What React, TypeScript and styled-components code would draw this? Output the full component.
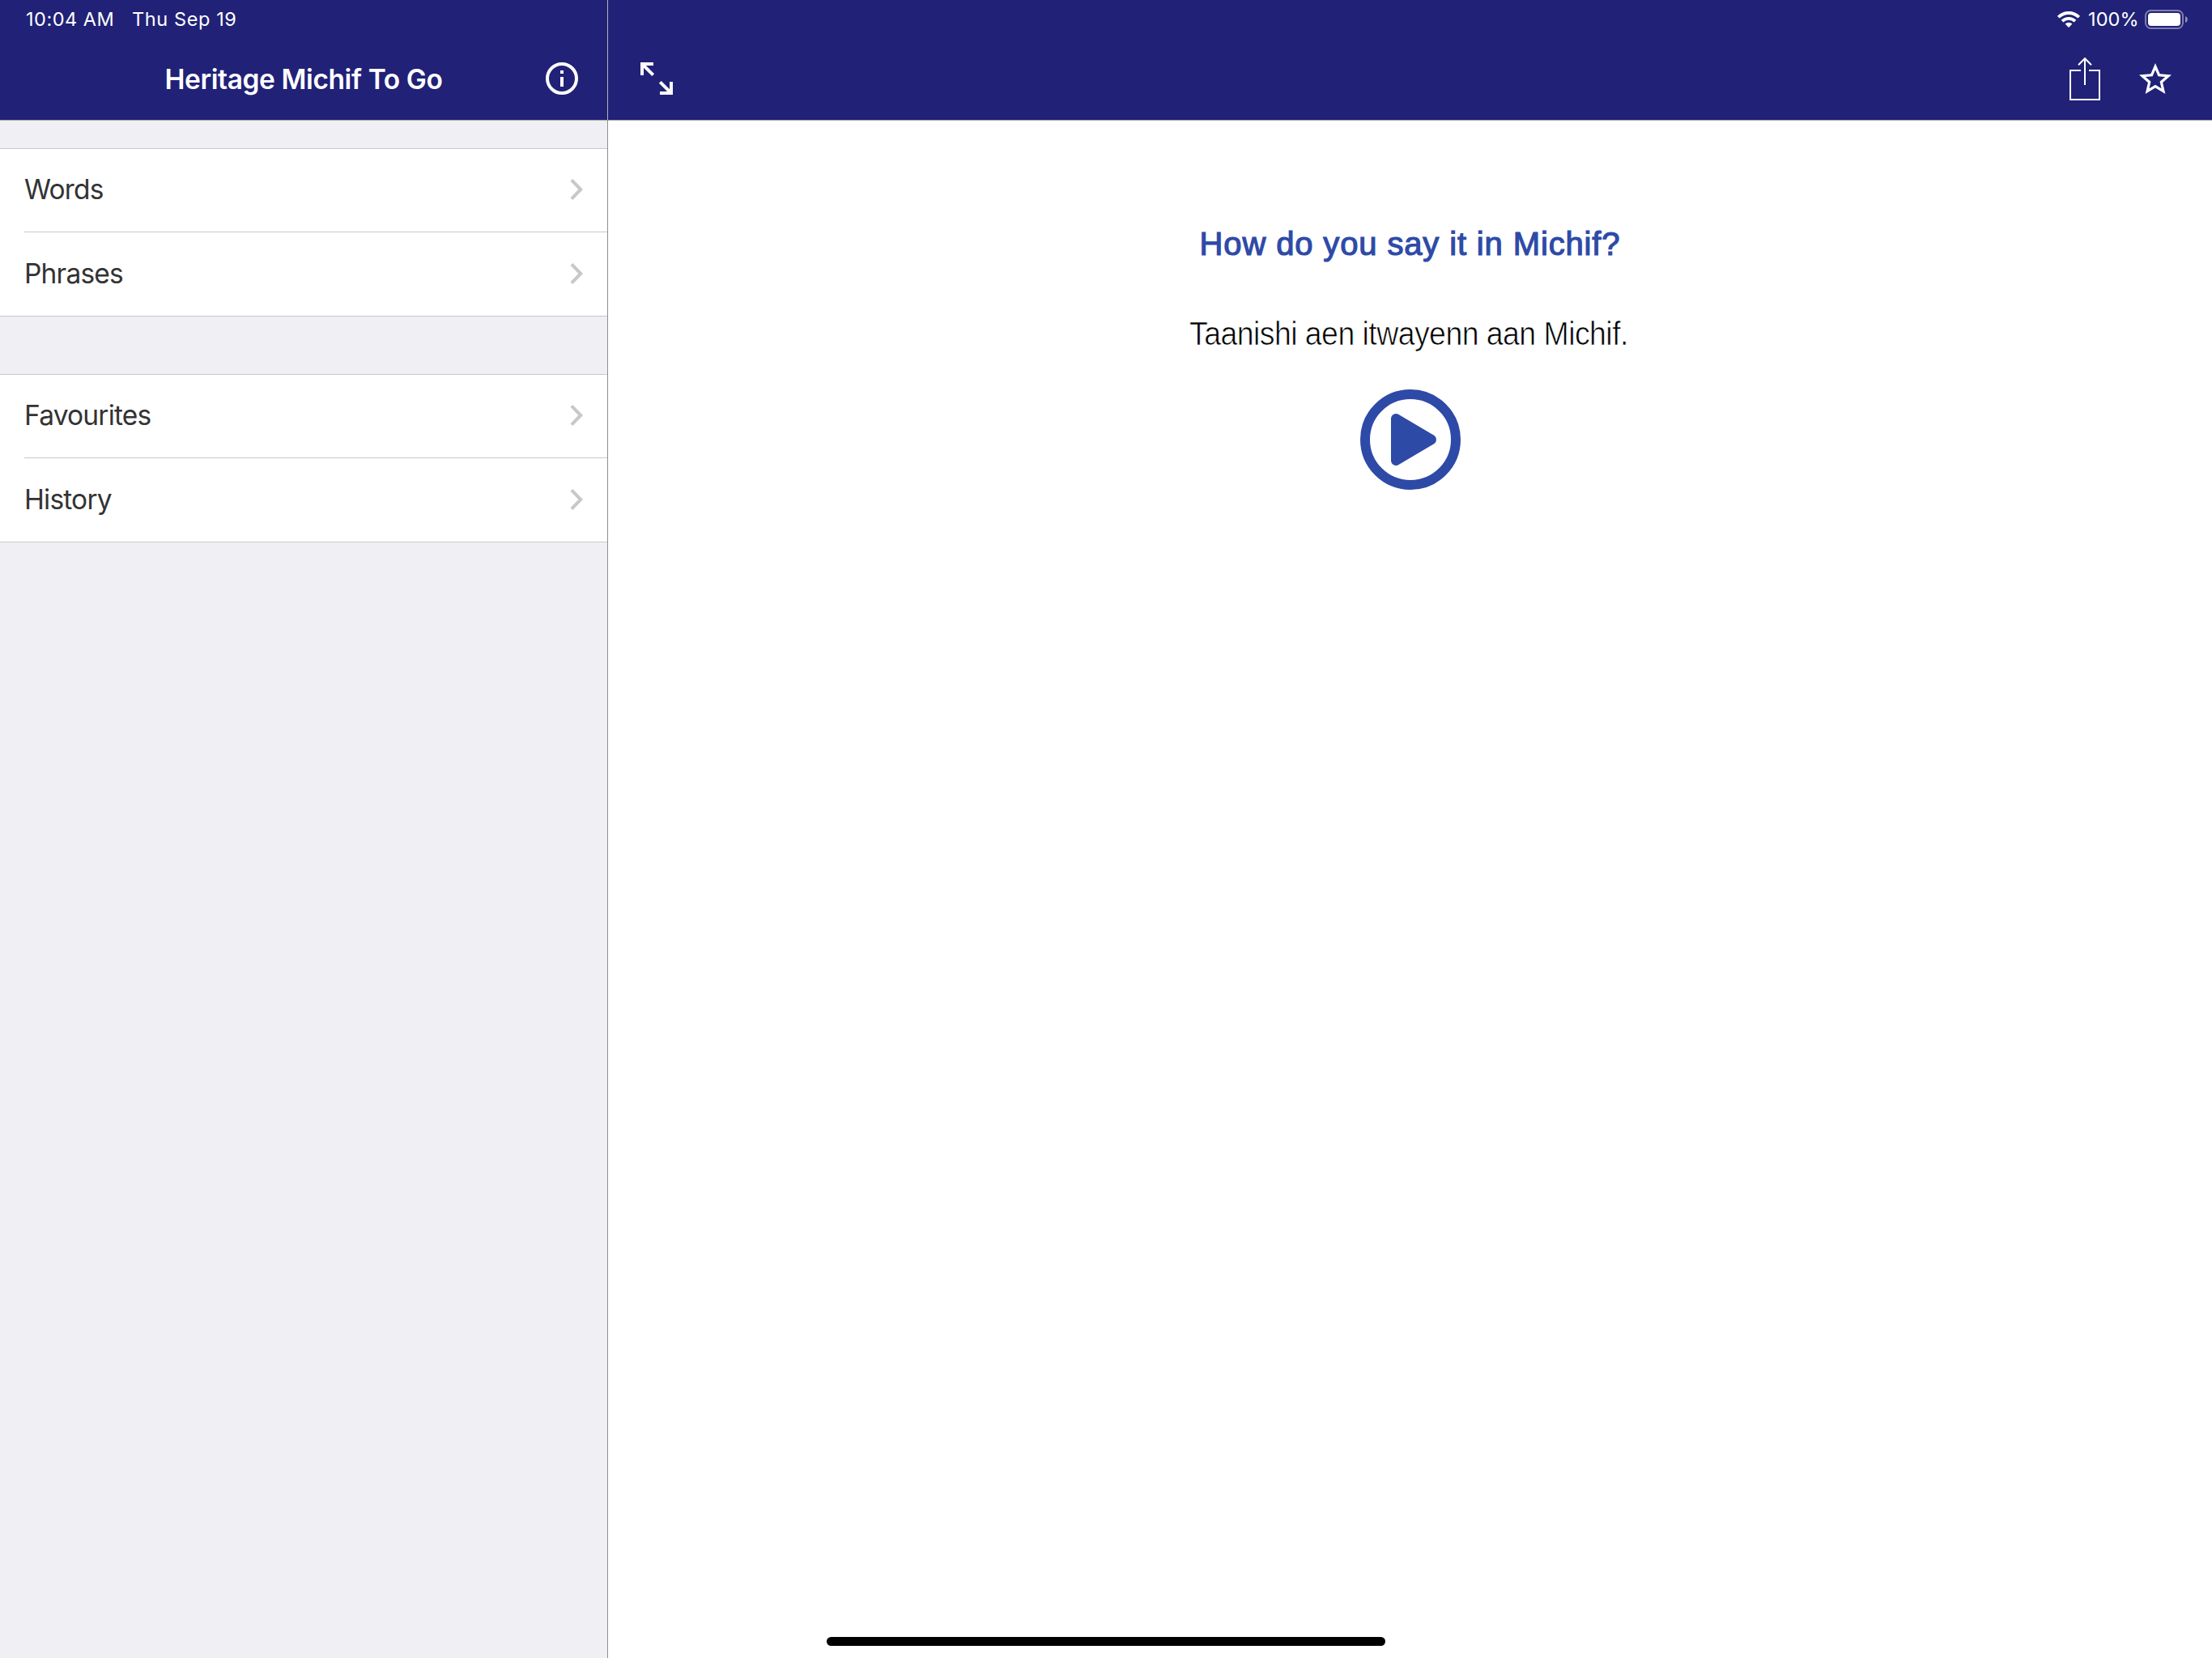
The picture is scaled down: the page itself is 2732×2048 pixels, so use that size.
import React from "react";
import styled, { createGlobalStyle } from "styled-components";

const NAVY = "#212177";
const BLUE = "#2e4aa7";

const GlobalStyle = createGlobalStyle`
  *, *::before, *::after { box-sizing: border-box; }
  html, body { margin: 0; padding: 0; background: #fff; overflow: hidden; }
  body { font-family: Inter, "Liberation Sans", sans-serif; }
  svg { display: block; flex: none; }
`;

const Screen = styled.div`
  position: relative;
  display: flex;
  width: 2732px;
  height: 2048px;
  overflow: hidden;
  background: #fff;
`;

const Sidebar = styled.aside`
  display: flex;
  flex-direction: column;
  width: 750px;
  flex: none;
  background: #efeff4;
`;

const Divider = styled.div`
  width: 1px;
  flex: none;
  background: linear-gradient(#b4b4ae 0 148px, #8e8e93 148px);
`;

const Detail = styled.main`
  display: flex;
  flex-direction: column;
  flex: 1;
  background: #fff;
`;

const Header = styled.header`
  display: flex;
  flex-direction: column;
  height: 149px;
  flex: none;
  color: #fff;
  background: ${NAVY};
  border-bottom: 1px solid #a3a3a3;
`;

const StatusBar = styled.div<{ $end?: boolean }>`
  display: flex;
  align-items: center;
  justify-content: ${(p) => (p.$end ? "flex-end" : "flex-start")};
  height: 48px;
  padding: ${(p) => (p.$end ? "0 30px 0 0" : "0 0 0 32px")};
  font-size: 23.5px;
  font-weight: 420;
  line-height: 48px;
  white-space: nowrap;
`;

const Clock = styled.span`
  width: 131px;
  letter-spacing: 0.5px;
`;

const DateText = styled.span`
  letter-spacing: 0.6px;
`;

const Percent = styled.span`
  width: 70px;
  padding-left: 10px;
  letter-spacing: 0.1px;
  margin-right: 10px;
`;

const NavBar = styled.div`
  display: flex;
  align-items: center;
  height: 98px;
`;

const SidebarNav = styled(NavBar)`
  display: grid;
  grid-template-columns: 112px 1fr 112px;
  justify-items: center;
`;

const NavTitle = styled.h1`
  grid-column: 2;
  margin: 0;
  padding-top: 2px;
  font-size: 33.5px;
  font-weight: 600;
  line-height: 40px;
  letter-spacing: -0.4px;
  white-space: nowrap;
`;

const IconButton = styled.button<{ $size: number }>`
  display: flex;
  align-items: center;
  justify-content: center;
  width: ${(p) => p.$size}px;
  height: ${(p) => p.$size}px;
  padding: 0;
  border: 0;
  color: inherit;
  background: none;
`;

const DetailNav = styled(NavBar)`
  padding: 0 46px 0 36px;
`;

const Actions = styled.div`
  display: flex;
  align-items: center;
  gap: 39px;
  margin-left: auto;
`;

const FavouriteButton = styled(IconButton)`
  margin-top: 2px;
`;

const ShareButton = styled(IconButton)`
  margin-top: 0;
`;

const Group = styled.nav<{ $gap: number }>`
  margin-top: ${(p) => p.$gap}px;
  background: #fff;
  border-top: 1px solid #c8c7cc;
  border-bottom: 1px solid #c8c7cc;
`;

const Row = styled.a`
  display: flex;
  padding-left: 30px;
  color: #333;
`;

const RowBody = styled.div`
  display: flex;
  align-items: center;
  justify-content: space-between;
  flex: 1;
  height: 103px;
  padding: 0 30px 1px 0;

  ${Row}:first-child > & {
    padding-bottom: 2px;
    border-bottom: 1px solid #c8c7cc;
  }
`;

const RowLabel = styled.span`
  font-size: 33.5px;
  line-height: 40px;
  letter-spacing: -0.8px;
`;

const Content = styled.div`
  display: flex;
  flex-direction: column;
  align-items: center;
  padding-top: 128px;
`;

const Question = styled.h2`
  margin: 0;
  font: 400 40px/48px "Liberation Sans", Arial, sans-serif;
  letter-spacing: 0.86px;
  color: ${BLUE};
  -webkit-text-stroke: 1.2px ${BLUE};
  white-space: nowrap;
`;

const Answer = styled.p`
  margin: 63px 4px 0 0;
  font: 400 40.5px/48px "Liberation Sans", Arial, sans-serif;
  letter-spacing: -0.6px;
  color: #000;
  -webkit-text-stroke: 0.7px #fff;
  transform: scaleX(0.925);
  white-space: nowrap;
`;

const PlayButton = styled(IconButton)`
  margin-top: 45px;
  color: ${BLUE};
`;

const HomeIndicator = styled.div`
  position: absolute;
  left: 1021px;
  bottom: 15px;
  width: 690px;
  height: 11px;
  border-radius: 6px;
  background: #000;
`;

const InfoIcon = () => (
  <svg width="40" height="40" viewBox="0 0 40 40">
    <circle cx="20" cy="20" r="18" fill="none" stroke="currentColor" strokeWidth="4" />
    <path d="M18 10h4v4h-4zM18 18h4v12h-4z" fill="currentColor" />
  </svg>
);

const ExpandIcon = () => (
  <svg width="40" height="40" viewBox="0 0 40 40" fill="none" stroke="currentColor" strokeWidth="4">
    <path d="M2 16V2H16M2.5 2.5L15.7 15.7" />
    <path d="M38 24V38H24M37.5 37.5L24.3 24.3" />
  </svg>
);

const ShareIcon = () => (
  <svg width="38" height="54" viewBox="0 0 38 54" fill="none" stroke="currentColor" strokeWidth="2">
    <path d="M14 17H1V53H37V17H24" />
    <path d="M19 35V2.5M11 10.2L19 2.2L27 10.2" />
  </svg>
);

const StarIcon = () => (
  <svg width="48" height="48" viewBox="0 0 24 24" fill="currentColor">
    <path d="M22 9.24l-7.19-.62L12 2 9.19 8.63 2 9.24l5.46 4.73L5.82 21 12 17.27 18.18 21l-1.63-7.03L22 9.24zM12 15.4l-3.76 2.27 1-4.28-3.32-2.88 4.38-.38L12 6.1l1.71 4.04 4.38.38-3.32 2.88 1 4.28L12 15.4z" />
  </svg>
);

const WifiIcon = () => (
  <svg width="28" height="20" viewBox="0 0 28 20">
    <g fill="none" stroke="currentColor" strokeWidth="3.9">
      <path d="M1.3 7.2A18 18 0 0 1 26.7 7.2" />
      <path d="M6 12.2A11.4 11.4 0 0 1 22 12.2" />
    </g>
    <path d="M14 20L9.6 15.6A6.2 6.2 0 0 1 18.4 15.6Z" fill="currentColor" />
  </svg>
);

const BatteryIcon = () => (
  <svg width="53" height="24" viewBox="0 0 53 24">
    <rect x="1" y="1" width="46" height="22" rx="6.5" fill="none" stroke="#fff" strokeOpacity="0.42" strokeWidth="2" />
    <rect x="4" y="4" width="40" height="16" rx="4" fill="#fff" />
    <path d="M50 8C53.8 9.3 53.8 14.7 50 16Z" fill="#fff" fillOpacity="0.5" />
  </svg>
);

const ChevronIcon = () => (
  <svg width="16" height="28" viewBox="0 0 16 28" fill="none" stroke="#c7c7cc" strokeWidth="4">
    <path d="M1.9 2.4L13.2 14L1.9 25.6" />
  </svg>
);

const PlayIcon = () => (
  <svg width="124" height="124" viewBox="0 0 124 124">
    <circle cx="62" cy="62" r="56" fill="none" stroke="currentColor" strokeWidth="12" />
    <path d="M44 36V88L88 62Z" fill="currentColor" stroke="currentColor" strokeWidth="12" strokeLinejoin="round" />
  </svg>
);

const groups = [
  { gap: 34, items: ["Words", "Phrases"] },
  { gap: 71, items: ["Favourites", "History"] },
];

export default function App() {
  return (
    <>
      <GlobalStyle />
      <Screen>
        <Sidebar>
          <Header>
            <StatusBar>
              <Clock>10:04 AM</Clock>
              <DateText>Thu Sep 19</DateText>
            </StatusBar>
            <SidebarNav>
              <NavTitle>Heritage Michif To Go</NavTitle>
              <IconButton $size={40} aria-label="About">
                <InfoIcon />
              </IconButton>
            </SidebarNav>
          </Header>
          {groups.map((group) => (
            <Group key={group.gap} $gap={group.gap}>
              {group.items.map((item) => (
                <Row key={item}>
                  <RowBody>
                    <RowLabel>{item}</RowLabel>
                    <ChevronIcon />
                  </RowBody>
                </Row>
              ))}
            </Group>
          ))}
        </Sidebar>
        <Divider />
        <Detail>
          <Header>
            <StatusBar $end>
              <WifiIcon />
              <Percent>100%</Percent>
              <BatteryIcon />
            </StatusBar>
            <DetailNav>
              <IconButton $size={48} aria-label="Full screen">
                <ExpandIcon />
              </IconButton>
              <Actions>
                <ShareButton $size={48} aria-label="Share">
                  <ShareIcon />
                </ShareButton>
                <FavouriteButton $size={48} aria-label="Add to favourites">
                  <StarIcon />
                </FavouriteButton>
              </Actions>
            </DetailNav>
          </Header>
          <Content>
            <Question>How do you say it in Michif?</Question>
            <Answer>Taanishi aen itwayenn aan Michif.</Answer>
            <PlayButton $size={124} aria-label="Play">
              <PlayIcon />
            </PlayButton>
          </Content>
        </Detail>
        <HomeIndicator />
      </Screen>
    </>
  );
}
